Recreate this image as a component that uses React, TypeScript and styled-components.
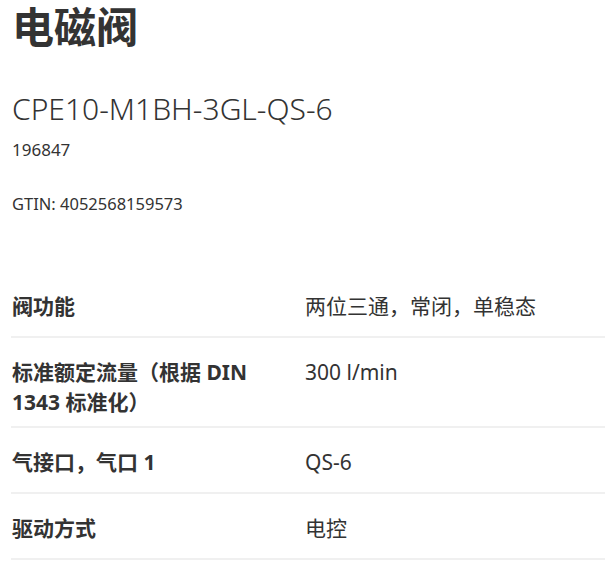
import React from "react";
import styled, { createGlobalStyle } from "styled-components";

const Global = createGlobalStyle`
  html, body { margin: 0; padding: 0; background: #fff; }
  body {
    font-family: "Noto Sans", "Noto Sans CJK SC", sans-serif;
    color: #333;
  }
`;

const Page = styled.div`
  width: 605px;
  padding: 0 0 0 11px;
  box-sizing: border-box;
`;

const Header = styled.div`
  display: flex;
  flex-direction: column;
  padding-left: 1px;
`;

const Title = styled.h1`
  margin: 0;
  font-size: 42px;
  line-height: 54px;
  font-weight: 700;
  color: #333;
`;

const PartNo = styled.div`
  margin-top: 35px;
  font-size: 30px;
  line-height: 40px;
  font-weight: 300;
`;

const Code = styled.div`
  margin-top: 9px;
  font-size: 17px;
  line-height: 24px;
`;

const Gtin = styled.div`
  margin-top: 30px;
  font-size: 16.5px;
  line-height: 24px;
`;

const Table = styled.div`
  margin-top: 56px;
  display: flex;
  flex-direction: column;
`;

const Row = styled.div`
  display: grid;
  grid-template-columns: 294px 1fr;
  min-height: 66px;
  box-sizing: border-box;
  padding: 19px 0 9px;
  border-bottom: 2px solid #f0f0f0;
  align-items: start;
`;

const Label = styled.div`
  padding-left: 1px;
  padding-right: 30px;
  font-size: 21px;
  line-height: 30px;
  font-weight: 700;
`;

const Value = styled.div`
  font-size: 21px;
  line-height: 30px;
  font-weight: 400;
`;

const rows: [string, string][] = [
  ["阀功能", "两位三通，常闭，单稳态"],
  ["标准额定流量（根据 DIN 1343 标准化）", "300 l/min"],
  ["气接口，气口 1", "QS-6"],
  ["驱动方式", "电控"],
];

export default function App() {
  return (
    <Page>
      <Global />
      <Header>
        <Title>电磁阀</Title>
        <PartNo>CPE10-M1BH-3GL-QS-6</PartNo>
        <Code>196847</Code>
        <Gtin>GTIN: 4052568159573</Gtin>
      </Header>
      <Table>
        {rows.map(([k, v]) => (
          <Row key={k}>
            <Label>{k}</Label>
            <Value>{v}</Value>
          </Row>
        ))}
      </Table>
    </Page>
  );
}
